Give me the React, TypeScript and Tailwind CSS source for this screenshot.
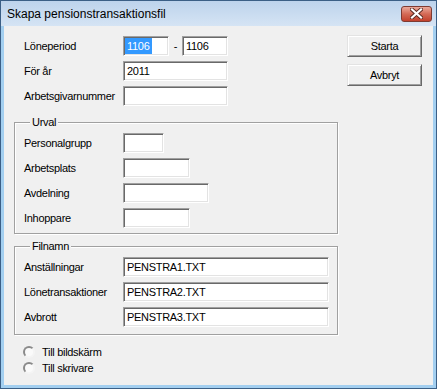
import type { ReactNode } from "react";

function Field({
  width,
  children,
}: {
  width: string;
  children?: ReactNode;
}) {
  return (
    <div
      className={`${width} flex h-[20px] items-center border border-t-[#a0a0a0] border-l-[#a0a0a0] border-r-white border-b-white bg-white pl-[3px] text-black shadow-[inset_1px_1px_0_#696969,inset_-1px_-1px_0_#e3e3e3]`}
    >
      {children}
    </div>
  );
}

function Row({ label, children }: { label: string; children: ReactNode }) {
  return (
    <div className="flex h-[20px] items-center">
      <span className="w-[99px] shrink-0">{label}</span>
      {children}
    </div>
  );
}

function Group({ title, children }: { title: string; children: ReactNode }) {
  return (
    <fieldset className="w-[324px] border border-[#a0a0a0] pl-[9px] shadow-[inset_1px_1px_0_#fff,1px_1px_0_#fff]">
      <legend className="ml-[6px] h-[13px] bg-[#f0f0f0] px-[2px] leading-[13px]">
        {title}
      </legend>
      {children}
    </fieldset>
  );
}

function Radio({ label }: { label: string }) {
  return (
    <div className="flex h-[16px] items-center">
      <span className="h-[12px] w-[12px] rounded-full border-2 border-t-[#8a8a8a] border-l-[#8a8a8a] border-r-[#f4f4f4] border-b-[#f4f4f4] bg-[#fafafa]" />
      <span className="ml-[7px]">{label}</span>
    </div>
  );
}

function Button({ children }: { children: ReactNode }) {
  return (
    <div className="flex h-[22px] w-[75px] items-center justify-center border border-t-[#e3e3e3] border-l-[#e3e3e3] border-r-[#696969] border-b-[#696969] bg-[#f0f0f0] shadow-[inset_1px_1px_0_#fff,inset_-1px_-1px_0_#a0a0a0]">
      {children}
    </div>
  );
}

export default function App() {
  return (
    <div className="flex h-[389px] w-[437px] flex-col border border-[#3b5f86] bg-[#a3cff0] font-['Liberation_Sans',Arial,sans-serif] text-[11px] tracking-[-0.3px] text-black">
      {/* title bar */}
      <div className="flex h-[25px] shrink-0 items-center justify-between bg-gradient-to-b from-[#bdd3ec] to-[#d5e4f4] pl-[6px] pr-[4px]">
        <span className="text-[12px] tracking-normal">
          Skapa pensionstransaktionsfil
        </span>
        <div className="flex h-[16px] w-[31px] items-center justify-center rounded-[3px] border border-[#7e3b32] bg-gradient-to-b from-[#e9a99b] via-[#d46a56] to-[#c2402c]">
          <svg width="13" height="11" viewBox="0 0 13 11">
            <path
              d="M2 1.5 L11 9.5 M11 1.5 L2 9.5"
              stroke="#5a2a22"
              strokeWidth="4"
              strokeLinecap="square"
            />
            <path
              d="M2 1.5 L11 9.5 M11 1.5 L2 9.5"
              stroke="#fff"
              strokeWidth="2.2"
              strokeLinecap="square"
            />
          </svg>
        </div>
      </div>

      {/* client */}
      <div className="mx-[3px] mb-[3px] flex flex-1 bg-[#f0f0f0]">
        <div className="flex w-[334px] flex-col pl-[10px] pt-[10px]">
          <div className="flex flex-col gap-[5px] pl-[10px]">
            <Row label="Löneperiod">
              <Field width="w-[46px]">
                <span className="-ml-[2px] bg-[#3399ff] pl-[2px] pr-[3px] text-white">
                  1106
                </span>
              </Field>
              <span className="w-[13px] text-center">-</span>
              <Field width="w-[46px]">1106</Field>
            </Row>
            <Row label="För år">
              <Field width="w-[105px]">2011</Field>
            </Row>
            <Row label="Arbetsgivarnummer">
              <Field width="w-[105px]" />
            </Row>
          </div>

          <div className="mt-[10px]">
            <Group title="Urval">
              <div className="flex flex-col gap-[5px] pb-[5px] pt-[4px]">
                <Row label="Personalgrupp">
                  <Field width="w-[41px]" />
                </Row>
                <Row label="Arbetsplats">
                  <Field width="w-[67px]" />
                </Row>
                <Row label="Avdelning">
                  <Field width="w-[86px]" />
                </Row>
                <Row label="Inhoppare">
                  <Field width="w-[67px]" />
                </Row>
              </div>
            </Group>
          </div>

          <div className="mt-[6px]">
            <Group title="Filnamn">
              <div className="flex flex-col gap-[5px] pb-[7px] pt-[4px]">
                <Row label="Anställningar">
                  <Field width="w-[206px]">PENSTRA1.TXT</Field>
                </Row>
                <Row label="Lönetransaktioner">
                  <Field width="w-[206px]">PENSTRA2.TXT</Field>
                </Row>
                <Row label="Avbrott">
                  <Field width="w-[206px]">PENSTRA3.TXT</Field>
                </Row>
              </div>
            </Group>
          </div>

          <div className="mt-[9px] flex flex-col pl-[9px]">
            <Radio label="Till bildskärm" />
            <Radio label="Till skrivare" />
          </div>
        </div>

        <div className="ml-[9px] flex flex-col gap-[7px] pt-[9px]">
          <Button>Starta</Button>
          <Button>Avbryt</Button>
        </div>
      </div>
    </div>
  );
}
